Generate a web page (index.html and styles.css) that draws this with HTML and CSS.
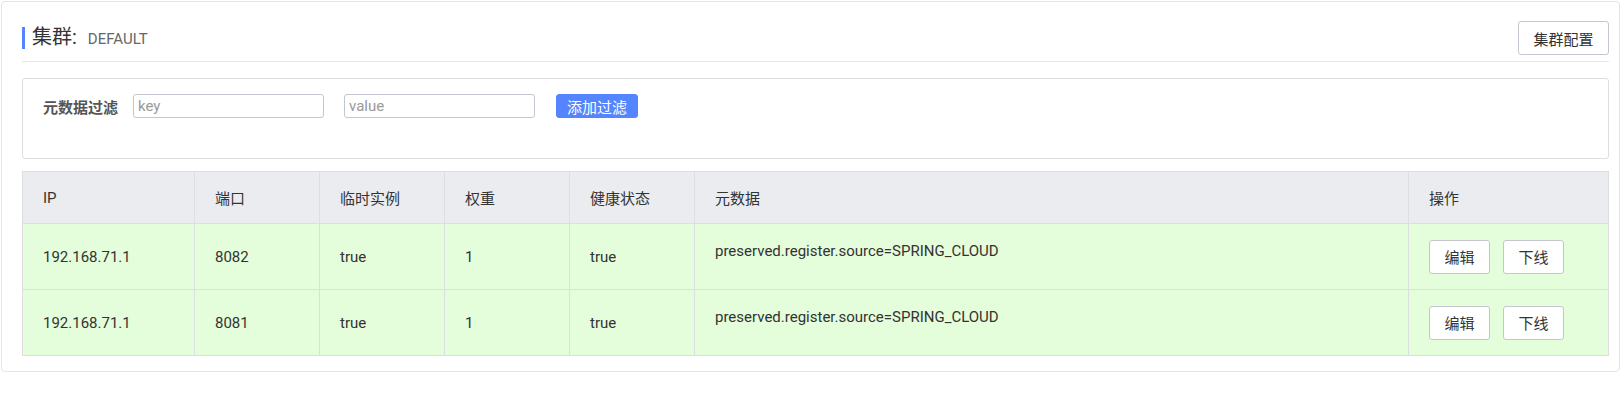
FILE: index.html
```html
<!DOCTYPE html>
<html lang="zh-CN">
<head>
    <meta charset="UTF-8">
    <meta name="viewport" content="width=device-width, initial-scale=1.0">
    <title>集群 - DEFAULT</title>
    <link rel="stylesheet" href="styles.css">
</head>
<body>
    <div class="card">
        <div class="card-head">
            <h1 class="card-title">集群:<span class="cluster-name">DEFAULT</span></h1>
            <button class="btn btn-config">集群配置</button>
        </div>

        <div class="filter-box">
            <label class="filter-label">元数据过滤</label>
            <input type="text" class="filter-input" placeholder="key">
            <input type="text" class="filter-input" placeholder="value">
            <button class="btn btn-primary">添加过滤</button>
        </div>

        <table class="instance-table">
            <thead>
                <tr>
                    <th class="col-ip">IP</th>
                    <th class="col-mid">端口</th>
                    <th class="col-mid">临时实例</th>
                    <th class="col-mid">权重</th>
                    <th class="col-mid">健康状态</th>
                    <th>元数据</th>
                    <th class="col-op">操作</th>
                </tr>
            </thead>
            <tbody>
                <tr>
                    <td>192.168.71.1</td>
                    <td>8082</td>
                    <td>true</td>
                    <td>1</td>
                    <td>true</td>
                    <td><div class="meta">preserved.register.source=SPRING_CLOUD</div></td>
                    <td>
                        <div class="ops">
                            <button class="btn btn-op">编辑</button>
                            <button class="btn btn-op">下线</button>
                        </div>
                    </td>
                </tr>
                <tr>
                    <td>192.168.71.1</td>
                    <td>8081</td>
                    <td>true</td>
                    <td>1</td>
                    <td>true</td>
                    <td><div class="meta">preserved.register.source=SPRING_CLOUD</div></td>
                    <td>
                        <div class="ops">
                            <button class="btn btn-op">编辑</button>
                            <button class="btn btn-op">下线</button>
                        </div>
                    </td>
                </tr>
            </tbody>
        </table>
    </div>
</body>
</html>
```

FILE: styles.css
```css
body {
    margin: 0;
    background-color: #fff;
    font-family: Roboto, "Noto Sans CJK SC", sans-serif;
    font-size: 15px;
    color: #333;
}

.card {
    margin: 1px 1px 0 1px;
    padding: 19px 10px 15px 20px;
    border: 1px solid #e3e4e8;
    border-radius: 4px;
}

.card-head {
    display: flex;
    align-items: center;
    justify-content: space-between;
    padding-bottom: 6px;
    border-bottom: 1px solid #e6e7eb;
}

.card-title {
    margin: 0;
    padding-left: 7px;
    border-left: 3px solid #5584ff;
    font-size: 20px;
    font-weight: normal;
    line-height: 20px;
    color: #333;
}

.cluster-name {
    margin-left: 11px;
    font-size: 15px;
    color: #666;
}

.btn {
    font-family: Roboto, "Noto Sans CJK SC", sans-serif;
    font-size: 15px;
    color: #333;
    background-color: #fff;
    border: 1px solid #c4c6cf;
    border-radius: 3px;
    cursor: pointer;
    padding: 0;
}

.btn-config {
    width: 91px;
    height: 34px;
}

.btn-primary {
    width: 82px;
    height: 24px;
    margin-left: 21px;
    color: #fff;
    background-color: #5584ff;
    border-color: #5584ff;
}

.btn-op {
    width: 61px;
    height: 34px;
}

.filter-box {
    display: flex;
    align-items: center;
    margin-top: 16px;
    padding: 15px 20px 40px;
    border: 1px solid #dcdee3;
    border-radius: 3px;
}

.filter-label {
    width: 90px;
    font-weight: bold;
    color: #555;
}

.filter-input {
    box-sizing: border-box;
    width: 191px;
    height: 24px;
    margin-right: 20px;
    padding: 0 4px;
    border: 1px solid #c4c6cf;
    border-radius: 3px;
    font-family: Roboto, "Noto Sans CJK SC", sans-serif;
    font-size: 15px;
    color: #333;
}

.filter-input:last-of-type {
    margin-right: 0;
}

.filter-input::placeholder {
    color: #999;
}

.instance-table {
    width: 100%;
    margin-top: 12px;
    border-collapse: collapse;
    table-layout: fixed;
}

.instance-table th,
.instance-table td {
    padding: 0 20px;
    border: 1px solid #dcdee3;
    text-align: left;
    font-weight: normal;
    vertical-align: middle;
}

.instance-table th {
    height: 51px;
    background-color: #ebecf0;
}

.instance-table td {
    height: 65px;
    background-color: #e4fdda;
}

/* widths below are content widths: cell = width + 40 padding + 1 border */
.col-ip {
    width: 131px;
}

.col-mid {
    width: 84px;
}

.col-op {
    width: 159px;
}

.meta {
    margin-bottom: 12px;
}

.ops {
    display: flex;
    gap: 13px;
}
```
